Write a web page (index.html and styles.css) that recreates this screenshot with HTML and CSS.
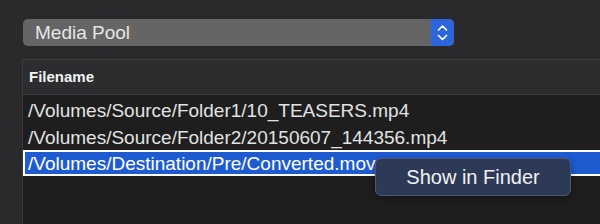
FILE: index.html
```html
<!DOCTYPE html>
<html>
<head>
<meta charset="utf-8">
<link rel="stylesheet" href="styles.css">
</head>
<body>
<div class="window">
  <div class="toolbar">
    <div class="popup">
      <span class="popup-label">Media Pool</span>
      <span class="popup-stepper">
        <svg width="23" height="27" viewBox="0 0 23 27">
          <path d="M7.5 11 L11.5 7 L15.5 11" fill="none" stroke="#fff" stroke-width="1.7" stroke-linecap="round" stroke-linejoin="round"/>
          <path d="M7.5 16.5 L11.5 20.5 L15.5 16.5" fill="none" stroke="#fff" stroke-width="1.7" stroke-linecap="round" stroke-linejoin="round"/>
        </svg>
      </span>
    </div>
  </div>
  <div class="table">
    <div class="table-header">Filename</div>
    <div class="table-body">
      <div class="row">/Volumes/Source/Folder1/10_TEASERS.mp4</div>
      <div class="row">/Volumes/Source/Folder2/20150607_144356.mp4</div>
      <div class="row row-selected">/Volumes/Destination/Pre/Converted.mov</div>
    </div>
  </div>
  <div class="context-menu">Show in Finder</div>
</div>
</body>
</html>
```

FILE: styles.css
```css
html, body {
  margin: 0;
  padding: 0;
  background: #2a2a2c;
  font-family: "Liberation Sans", Arial, sans-serif;
}
.window {
  position: relative;
  width: 600px;
  height: 224px;
  overflow: hidden;
}
.toolbar {
  padding: 19px 0 13px 23px;
}
.popup {
  display: flex;
  width: 431px;
  height: 27px;
  border-radius: 5px;
  overflow: hidden;
  background: #656565;
}
.popup-label {
  flex: 1;
  padding-left: 12px;
  color: #e6e6e6;
  font-size: 19px;
  line-height: 27px;
}
.popup-stepper {
  width: 23px;
  height: 27px;
  background: #2b66dc;
  display: flex;
}
.table {
  margin-left: 22px;
  border-left: 1px solid #3c3c3e;
  border-top: 1px solid #3c3c3e;
  height: 165px;
  background: #1e1e1f;
}
.table-header {
  height: 34px;
  border-bottom: 1px solid #3c3c3e;
  background: #2c2d2f;
  color: #f2f2f2;
  font-size: 15px;
  font-weight: bold;
  line-height: 34px;
  padding-left: 6px;
}
.table-body {
  padding-top: 2px;
}
.row {
  height: 27px;
  line-height: 27px;
  font-size: 19px;
  color: #e2e2e2;
  padding-left: 5px;
  white-space: nowrap;
}
.row-selected {
  box-sizing: border-box;
  margin-top: -1px;
  height: 26px;
  line-height: 22px;
  padding: 1px 0 0 3px;
  border: 2px solid #ffffff;
  border-right: none;
  background: #1f5bd0;
  color: #ffffff;
}
.context-menu {
  position: absolute;
  left: 375px;
  top: 158px;
  width: 196px;
  height: 38px;
  box-sizing: border-box;
  border: 1px solid #4d5873;
  border-radius: 6px;
  background: #2c3a58;
  color: #f2f2f2;
  font-size: 20px;
  line-height: 36px;
  text-align: center;
  box-shadow: 0 2px 6px rgba(0,0,0,0.35);
}
```
